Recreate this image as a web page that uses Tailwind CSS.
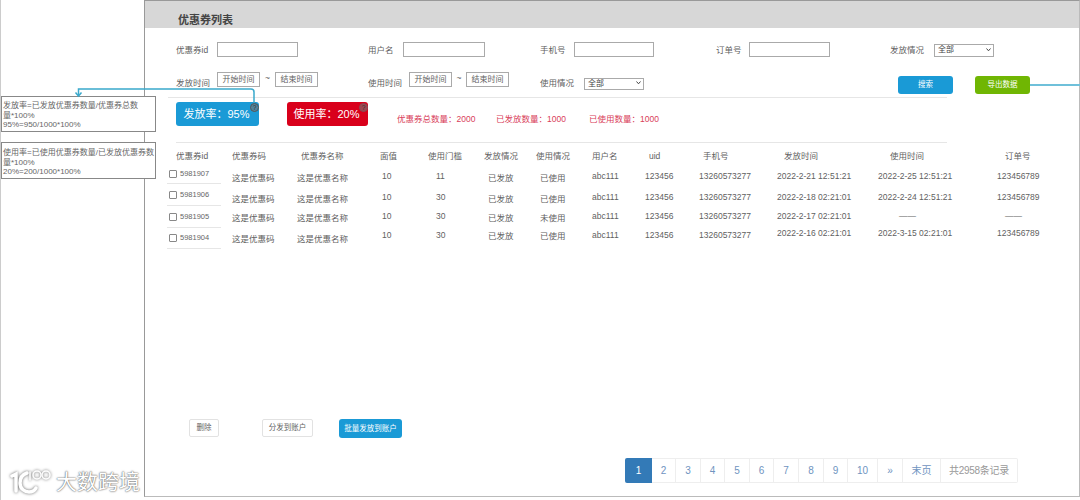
<!DOCTYPE html>
<html lang="zh">

<head>
  <meta charset="utf-8">
  <meta name="viewport" content="width=device-width, initial-scale=1.0">
  <script src="https://cdn.jsdelivr.net/npm/@tailwindcss/browser@4"></script>
  <title>优惠券列表</title>
</head>

<body class="bg-white overflow-hidden">
  <div class="relative flex w-[1080px] h-[500px] text-[8.5px] leading-[12px] text-[#5f5f5f] font-['Liberation_Sans','Noto_Sans_CJK_SC',sans-serif]">

    <!-- left gutter -->
    <div class="w-[144px] h-full border-l border-[#ccc]"></div>

    <!-- main panel -->
    <div class="flex-1 h-[497px] flex flex-col border-l border-r border-b border-l-[#999] border-r-[#bbb] border-b-[#bbb] border-t border-t-[#999]">
      <div class="h-[27px] bg-[#d7d7d7] flex items-end pl-[33px] pb-[1px]">
        <h1 class="text-[11px] leading-[14px] font-bold text-[#444]">优惠券列表</h1>
      </div>

      <!-- filters -->
      <div class="flex pl-[31px] mt-[14px] h-[15px] items-center">
        <div class="flex items-center w-[192px]">
          <span class="w-[41px]">优惠券id</span>
          <span class="w-[81px] h-[15px] border border-[#aaa]"></span>
        </div>
        <div class="flex items-center w-[172px]">
          <span class="w-[35px]">用户名</span>
          <span class="w-[82px] h-[15px] border border-[#aaa]"></span>
        </div>
        <div class="flex items-center w-[176px]">
          <span class="w-[34px]">手机号</span>
          <span class="w-[80px] h-[15px] border border-[#aaa]"></span>
        </div>
        <div class="flex items-center w-[174px]">
          <span class="w-[33px]">订单号</span>
          <span class="w-[81px] h-[15px] border border-[#aaa]"></span>
        </div>
        <div class="flex items-center">
          <span class="w-[44px]">发放情况</span>
          <div class="relative w-[60px] h-[13px]">
            <select class="appearance-none w-full h-full border border-[#aaa] text-[8px] leading-[10px] text-[#444] pl-[3px] bg-white">
              <option>全部</option>
            </select>
            <svg class="absolute right-[3px] top-[5px]" width="5" height="4" viewBox="0 0 5 4" fill="none" stroke="#444" stroke-width="1"><path d="M0.500 0.500L2.500 2.800L4.500 0.500" /></svg>
          </div>
        </div>
      </div>

      <div class="flex pl-[31px] mt-[15px] h-[25px] items-start">
        <div class="flex w-[192px]">
          <span class="w-[41px] mt-[5px]">发放时间</span>
          <span class="w-[43px] h-[15px] border border-[#aaa] text-[8px] flex items-center justify-center">开始时间</span>
          <span class="w-[15px] text-center">~</span>
          <span class="w-[43px] h-[15px] border border-[#aaa] text-[8px] flex items-center justify-center">结束时间</span>
        </div>
        <div class="flex w-[172px]">
          <span class="w-[41px] mt-[5px]">使用时间</span>
          <span class="w-[43px] h-[15px] border border-[#aaa] text-[8px] flex items-center justify-center">开始时间</span>
          <span class="w-[14px] text-center">~</span>
          <span class="w-[43px] h-[15px] border border-[#aaa] text-[8px] flex items-center justify-center">结束时间</span>
        </div>
        <div class="flex items-center w-[358px] mt-[5px]">
          <span class="w-[44px]">使用情况</span>
          <div class="relative w-[60px] h-[12px]">
            <select class="appearance-none w-full h-full border border-[#aaa] text-[8px] leading-[10px] text-[#444] pl-[3px] bg-white">
              <option>全部</option>
            </select>
            <svg class="absolute right-[3px] top-[4px]" width="5" height="4" viewBox="0 0 5 4" fill="none" stroke="#444" stroke-width="1"><path d="M0.500 0.500L2.500 2.800L4.500 0.500" /></svg>
          </div>
        </div>
        <button class="w-[55px] h-[18px] mt-[4px] rounded-[3px] bg-[#1a9ad6] text-white text-[7.5px]">搜索</button>
        <button class="relative w-[55px] h-[18px] mt-[4px] ml-[22px] rounded-[3px] bg-[#70b603] text-white text-[7.5px]">
          导出数据
          <span class="absolute left-full top-[8px] w-[50px] h-[2px] bg-[#6fc0da]"></span>
        </button>
      </div>
      <div class="h-px w-[779px] ml-[23px] bg-[#e6e6e6]"></div>

      <!-- rate cards and totals -->
      <div class="flex pl-[31px] mt-[4px] h-[24px]">
        <div class="relative w-[83px] h-[24px] pr-[2px] rounded-[3px] bg-[#1a9ad6] text-white text-[11px] flex items-center justify-center">
          发放率：95%
          <span class="absolute right-0 top-[1px] w-[9px] h-[9px] rounded-full border border-[#555] bg-[#777]/60 text-[#333] text-[6.5px] leading-[7px] text-center">?</span>
        </div>
        <div class="relative w-[81px] h-[24px] ml-[28px] pr-[2px] rounded-[3px] bg-[#d9001b] text-white text-[11px] flex items-center justify-center">
          使用率：20%
          <span class="absolute right-0 top-[1px] w-[9px] h-[9px] rounded-full border border-[#8a4a52] bg-[#777]/60 text-[#333] text-[6.5px] leading-[7px] text-center">?</span>
        </div>
        <div class="flex items-end pb-[1px] text-[#d9405a]">
          <span class="ml-[29px] w-[99px]">优惠券总数量：2000</span>
          <span class="w-[93px]">已发放数量：1000</span>
          <span>已使用数量：1000</span>
        </div>
      </div>
      <div class="h-px w-[771px] ml-[31px] mt-[16px] bg-[#e6e6e6]"></div>

      <!-- table header -->
      <div class="grid grid-cols-[67px_69px_79px_48px_56px_52px_56px_57px_54px_81px_106px_115px_auto] ml-[20px] mt-[7px] h-[12px]">
        <span class="pl-[11px]">优惠券id</span>
        <span>优惠券码</span>
        <span>优惠券名称</span>
        <span>面值</span>
        <span>使用门槛</span>
        <span>发放情况</span>
        <span>使用情况</span>
        <span>用户名</span>
        <span>uid</span>
        <span>手机号</span>
        <span>发放时间</span>
        <span>使用时间</span>
        <span>订单号</span>
      </div>

      <!-- table rows -->
      <div class="grid grid-cols-[67px_65px_85px_54px_52px_52px_52px_53px_54px_78px_101px_119px_auto] ml-[20px] h-[22px]">
        <div class="flex items-start w-[54px] ml-[2px] h-[22px] border-b border-[#e6e6e6] pt-[6px] text-[7.5px] text-[#666]"><span class="w-[8px] h-[8px] mt-[2px] mr-[3px] ml-[2px] border border-[#888] rounded-[1px]"></span>5981907</div>
        <span class="mt-[10px]">这是优惠码</span>
        <span class="mt-[10px]">这是优惠名称</span>
        <span class="mt-[8px]">10</span>
        <span class="mt-[8px]">11</span>
        <span class="mt-[10px]">已发放</span>
        <span class="mt-[10px]">已使用</span>
        <span class="mt-[8px]">abc111</span>
        <span class="mt-[8px]">123456</span>
        <span class="mt-[8px]">13260573277</span>
        <span class="mt-[8px]">2022-2-21 12:51:21</span>
        <span class="mt-[8px]">2022-2-25 12:51:21</span>
        <span class="mt-[8px]">123456789</span>
      </div>
      <div class="grid grid-cols-[67px_65px_85px_54px_52px_52px_52px_53px_54px_78px_101px_119px_auto] ml-[20px] h-[22px]">
        <div class="flex items-start w-[54px] ml-[2px] h-[22px] border-b border-[#e6e6e6] pt-[5px] text-[7.5px] text-[#666]"><span class="w-[8px] h-[8px] mt-[2px] mr-[3px] ml-[2px] border border-[#888] rounded-[1px]"></span>5981906</div>
        <span class="mt-[9px]">这是优惠码</span>
        <span class="mt-[9px]">这是优惠名称</span>
        <span class="mt-[7px]">10</span>
        <span class="mt-[7px]">30</span>
        <span class="mt-[9px]">已发放</span>
        <span class="mt-[9px]">已使用</span>
        <span class="mt-[7px]">abc111</span>
        <span class="mt-[7px]">123456</span>
        <span class="mt-[7px]">13260573277</span>
        <span class="mt-[7px]">2022-2-18 02:21:01</span>
        <span class="mt-[7px]">2022-2-24 12:51:21</span>
        <span class="mt-[7px]">123456789</span>
      </div>
      <div class="grid grid-cols-[67px_65px_85px_54px_52px_52px_52px_53px_54px_78px_101px_119px_auto] ml-[20px] h-[22px]">
        <div class="flex items-start w-[54px] ml-[2px] h-[22px] border-b border-[#e6e6e6] pt-[5px] text-[7.5px] text-[#666]"><span class="w-[8px] h-[8px] mt-[2px] mr-[3px] ml-[2px] border border-[#888] rounded-[1px]"></span>5981905</div>
        <span class="mt-[6px]">这是优惠码</span>
        <span class="mt-[6px]">这是优惠名称</span>
        <span class="mt-[4px]">10</span>
        <span class="mt-[4px]">30</span>
        <span class="mt-[6px]">已发放</span>
        <span class="mt-[6px]">未使用</span>
        <span class="mt-[4px]">abc111</span>
        <span class="mt-[4px]">123456</span>
        <span class="mt-[4px]">13260573277</span>
        <span class="mt-[4px]">2022-2-17 02:21:01</span>
        <span class="mt-[4px] pl-[21px]">——</span>
        <span class="mt-[4px] pl-[8px]">——</span>
      </div>
      <div class="grid grid-cols-[67px_65px_85px_54px_52px_52px_52px_53px_54px_78px_101px_119px_auto] ml-[20px] h-[21px]">
        <div class="flex items-start w-[54px] ml-[2px] h-[21px] border-b border-[#e6e6e6] pt-[4px] text-[7.5px] text-[#666]"><span class="w-[8px] h-[8px] mt-[2px] mr-[3px] ml-[2px] border border-[#888] rounded-[1px]"></span>5981904</div>
        <span class="mt-[5px]">这是优惠码</span>
        <span class="mt-[5px]">这是优惠名称</span>
        <span class="mt-[1px]">10</span>
        <span class="mt-[1px]">30</span>
        <span class="mt-[2px]">已发放</span>
        <span class="mt-[2px]">已使用</span>
        <span class="mt-[1px]">abc111</span>
        <span class="mt-[1px]">123456</span>
        <span class="mt-[1px]">13260573277</span>
        <span class="-mt-px">2022-2-16 02:21:01</span>
        <span class="-mt-px">2022-3-15 02:21:01</span>
        <span class="-mt-px">123456789</span>
      </div>

      <!-- batch actions -->
      <div class="flex items-start pl-[44px] mt-[170px] h-[19px] text-[7.5px]">
        <button class="w-[30px] h-[18px] border border-[#e2e2e2] rounded-[2px] bg-white">删除</button>
        <button class="w-[51px] h-[18px] ml-[43px] border border-[#e2e2e2] rounded-[2px] bg-white">分发到账户</button>
        <button class="w-[63px] h-[19px] ml-[26px] rounded-[3px] bg-[#1a9ad6] text-white">批量发放到账户</button>
      </div>

      <!-- pagination -->
      <div class="flex self-end mr-[61px] mt-[20px] h-[25px] text-[10px] text-[#6f94bf]">
        <a class="w-[27px] flex items-center justify-center bg-[#337ab7] text-white rounded-l-[2px]">1</a>
        <a class="w-[24px] flex items-center justify-center border border-l-0 border-[#eee]">2</a>
        <a class="w-[25px] flex items-center justify-center border border-l-0 border-[#eee]">3</a>
        <a class="w-[24px] flex items-center justify-center border border-l-0 border-[#eee]">4</a>
        <a class="w-[25px] flex items-center justify-center border border-l-0 border-[#eee]">5</a>
        <a class="w-[24px] flex items-center justify-center border border-l-0 border-[#eee]">6</a>
        <a class="w-[25px] flex items-center justify-center border border-l-0 border-[#eee]">7</a>
        <a class="w-[25px] flex items-center justify-center border border-l-0 border-[#eee]">8</a>
        <a class="w-[24px] flex items-center justify-center border border-l-0 border-[#eee]">9</a>
        <a class="w-[30px] flex items-center justify-center border border-l-0 border-[#eee]">10</a>
        <a class="w-[25px] flex items-center justify-center border border-l-0 border-[#eee]">»</a>
        <a class="w-[38px] flex items-center justify-center border border-l-0 border-[#eee]">末页</a>
        <span class="w-[77px] flex items-center justify-center border border-l-0 border-[#eee] rounded-r-[2px] tracking-[-0.3px] text-[#999]">共2958条记录</span>
      </div>
    </div>

    <!-- annotations over the panel -->
    <div class="absolute left-[1px] top-[96px] w-[155px] h-[36px] border border-[#888] bg-white text-[8px] leading-[9.5px] text-[#666] pl-px pr-[12px] pt-[4px]">
      发放率=已发放优惠券数量/优惠券总数量*100%<br>95%=950/1000*100%
    </div>
    <div class="absolute left-[1px] top-[142px] w-[155px] h-[37px] border border-[#888] bg-white text-[8px] leading-[9.5px] text-[#666] pl-px pt-[5px]">
      使用率=已使用优惠券数量/已发放优惠券数量*100%<br>20%=200/1000*100%
    </div>

    <!-- connector from the rate card to its note -->
    <svg class="absolute left-0 top-0 pointer-events-none" width="300" height="110" fill="none" stroke="#3aa9cc" stroke-width="1.500">
      <path d="M254 103V92q0-3-3-3H78.500V95" />
      <path d="M75.500 92.500L78.500 96L81.500 92.500" />
    </svg>

    <!-- watermark -->
    <div class="absolute left-[10px] top-[466px] flex items-center text-white [text-shadow:0_0_2px_#666,0_0_1px_#666]">
      <svg width="44" height="28" viewBox="0 0 44 28" fill="none" stroke="#fff" stroke-width="3.500" stroke-linecap="round" class="drop-shadow-[0_0_1.500px_#666]">
        <path d="M2 9L6 7V24" />
        <path d="M17 6C11 8 10 13 10 16C10 22 15 25 19 25C23 25 25 23 26 21" />
        <path d="M20 5V13" stroke-width="1.500" />
        <circle cx="27" cy="8" r="4" stroke-width="1.500" />
        <circle cx="36" cy="8" r="4" stroke-width="1.500" />
      </svg>
      <span class="text-[21px] leading-[28px] mt-[2px] ml-[2px]">大数跨境</span>
    </div>
  </div>
</body>

</html>
